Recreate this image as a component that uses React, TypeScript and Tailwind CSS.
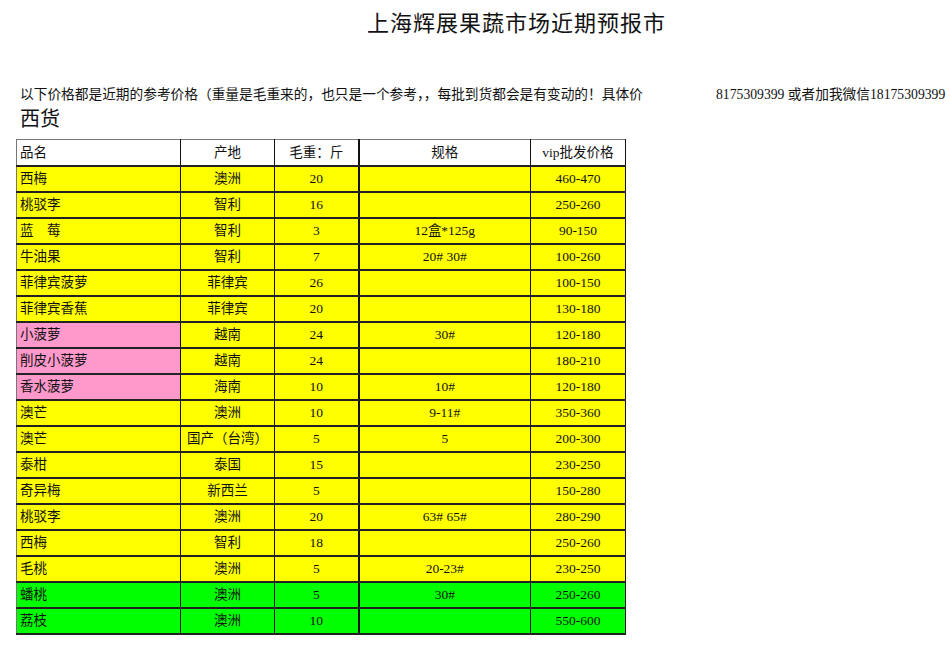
const FONT = "font-['Liberation_Serif','Noto_Sans_CJK_SC',serif]"

type Row = { name: string; origin: string; weight: string; spec: string; price: string; bg: string; nameBg?: string }

const Y = "bg-[#ffff00]"
const P = "bg-[#ff99cc]"
const G = "bg-[#00ff00]"

const ROWS: Row[] = [
    { name: "西梅", origin: "澳洲", weight: "20", spec: "", price: "460-470", bg: Y },
    { name: "桃驳李", origin: "智利", weight: "16", spec: "", price: "250-260", bg: Y },
    { name: "蓝\u3000莓", origin: "智利", weight: "3", spec: "12盒*125g", price: "90-150", bg: Y },
    { name: "牛油果", origin: "智利", weight: "7", spec: "20# 30#", price: "100-260", bg: Y },
    { name: "菲律宾菠萝", origin: "菲律宾", weight: "26", spec: "", price: "100-150", bg: Y },
    { name: "菲律宾香蕉", origin: "菲律宾", weight: "20", spec: "", price: "130-180", bg: Y },
    { name: "小菠萝", origin: "越南", weight: "24", spec: "30#", price: "120-180", bg: Y, nameBg: P },
    { name: "削皮小菠萝", origin: "越南", weight: "24", spec: "", price: "180-210", bg: Y, nameBg: P },
    { name: "香水菠萝", origin: "海南", weight: "10", spec: "10#", price: "120-180", bg: Y, nameBg: P },
    { name: "澳芒", origin: "澳洲", weight: "10", spec: "9-11#", price: "350-360", bg: Y },
    { name: "澳芒", origin: "国产（台湾）", weight: "5", spec: "5", price: "200-300", bg: Y },
    { name: "泰柑", origin: "泰国", weight: "15", spec: "", price: "230-250", bg: Y },
    { name: "奇异梅", origin: "新西兰", weight: "5", spec: "", price: "150-280", bg: Y },
    { name: "桃驳李", origin: "澳洲", weight: "20", spec: "63# 65#", price: "280-290", bg: Y },
    { name: "西梅", origin: "智利", weight: "18", spec: "", price: "250-260", bg: Y },
    { name: "毛桃", origin: "澳洲", weight: "5", spec: "20-23#", price: "230-250", bg: Y },
    { name: "蟠桃", origin: "澳洲", weight: "5", spec: "30#", price: "250-260", bg: G },
    { name: "荔枝", origin: "澳洲", weight: "10", spec: "", price: "550-600", bg: G },
]

const cell = "h-[26px] border-b-2 border-b-[#222] border-r border-r-[#111] px-[3px] text-[13.5px] leading-none text-[#111] whitespace-nowrap"

export default function App() {
    return (
        <div className={`w-[950px] h-[672px] bg-white overflow-hidden ${FONT}`}>
            <div className="pl-[367px] pt-[11px] h-[60px] text-[22px] leading-[26px] tracking-[1px] text-[#111]">
                上海辉展果蔬市场近期预报市
            </div>
            <div className="flex pl-[20px] mt-[27px] text-[13.7px] leading-[16px] text-[#111] whitespace-nowrap">
                <span className="w-[696px] overflow-hidden">以下价格都是近期的参考价格（重量是毛重来的，也只是一个参考，，每批到货都会是有变动的！具体价</span>
                <span>8175309399 或者加我微信18175309399</span>
            </div>
            <div className="pl-[20px] mt-[4px] text-[20px] leading-[24px] text-[#111]">西货</div>
            <div className="pl-[16px] mt-[8px]">
                <table className="border-collapse table-fixed w-[610px] border border-[#777]">
                    <colgroup>
                        <col className="w-[164px]" />
                        <col className="w-[94px]" />
                        <col className="w-[84px]" />
                        <col className="w-[172px]" />
                        <col className="w-[95px]" />
                    </colgroup>
                    <thead>
                        <tr className="bg-white">
                            <th className={`${cell} font-normal text-left`}>品名</th>
                            <th className={`${cell} font-normal text-center`}>产地</th>
                            <th className={`${cell} font-normal text-center border-r-2`}>毛重：斤</th>
                            <th className={`${cell} font-normal text-center`}>规格</th>
                            <th className={`${cell} font-normal text-center`}>vip批发价格</th>
                        </tr>
                    </thead>
                    <tbody>
                        {ROWS.map((r, i) => (
                            <tr key={i} className={r.bg}>
                                <td className={`${cell} text-left ${r.nameBg ?? ""}`}>{r.name}</td>
                                <td className={`${cell} text-center`}>{r.origin}</td>
                                <td className={`${cell} text-center border-r-2`}>{r.weight}</td>
                                <td className={`${cell} text-center`}>{r.spec}</td>
                                <td className={`${cell} text-center`}>{r.price}</td>
                            </tr>
                        ))}
                    </tbody>
                </table>
            </div>
        </div>
    )
}
